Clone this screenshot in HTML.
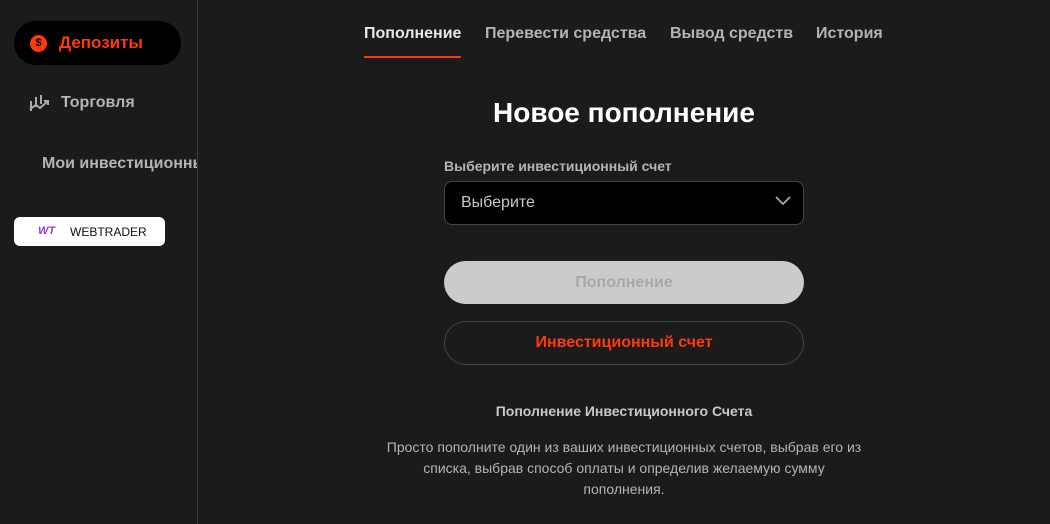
<!DOCTYPE html>
<html><head><meta charset="utf-8"><style>
body{margin:0;width:1050px;height:524px;background:#1b1b1b;font-family:"Liberation Sans",sans-serif;position:relative;overflow:hidden;color:#fff}
.a{position:absolute}
.side{left:0;top:0;width:197px;height:524px;border-right:1px solid #3a3a3a;overflow:hidden}
.tab{top:25px;font-size:16px;font-weight:bold;color:#b4b4b4}
</style></head><body>
<div class="a side">
 <div class="a" style="left:14px;top:21px;width:167px;height:44px;border-radius:22px;background:#000"></div>
 <div class="a" style="left:30px;top:35px;width:17px;height:17px;border-radius:50%;background:#ff3a0a;color:#000;font-size:11px;font-weight:bold;text-align:center;line-height:17px">$</div>
 <div class="a" style="left:59px;top:33px;font-size:17px;font-weight:bold;color:#ff3a0a">Депозиты</div>
 <svg class="a" style="left:29px;top:93px" width="21" height="20" viewBox="0 0 21 20" fill="none" stroke="#aaa" stroke-width="2"><path d="M2 8v10M7 4v10M12 2v9M1 16l6-4 4 3 8-7M15 8h4v4"/></svg>
 <div class="a" style="left:61px;top:94px;font-size:16px;font-weight:bold;color:#b4b4b4">Торговля</div>
 <div class="a" style="left:42px;top:155px;font-size:16px;font-weight:bold;color:#b4b4b4;white-space:nowrap">Мои инвестиционные счета</div>
 <div class="a" style="left:14px;top:217px;width:151px;height:29px;border-radius:6px;background:#fff"></div>
 <div class="a" style="left:38px;top:225px;font-size:11px;font-weight:bold;color:#9b3ad8;font-style:italic">WT</div>
 <div class="a" style="left:70px;top:225px;font-size:12px;color:#111">WEBTRADER</div>
</div>
<div class="a tab" style="left:364px;color:#e8e8e8">Пополнение</div>
<div class="a" style="left:364px;top:56px;width:97px;height:2px;background:#ff3a0a"></div>
<div class="a tab" style="left:485px">Перевести средства</div>
<div class="a tab" style="left:670px">Вывод средств</div>
<div class="a tab" style="left:816px">История</div>
<div class="a" style="left:424px;width:400px;top:97px;text-align:center;font-size:28px;font-weight:bold">Новое пополнение</div>
<div class="a" style="left:444px;top:158px;font-size:14px;font-weight:bold;color:#b4b4b4">Выберите инвестиционный счет</div>
<div class="a" style="left:444px;top:181px;width:358px;height:42px;border:1px solid #444;border-radius:8px;background:#000"></div>
<div class="a" style="left:461px;top:194px;font-size:16px;color:#c8c8c8">Выберите</div>
<svg class="a" style="left:775px;top:196px" width="16" height="10" viewBox="0 0 16 10" fill="none" stroke="#aaa" stroke-width="1.8"><path d="M1 1l7 7 7-7"/></svg>
<div class="a" style="left:444px;top:261px;width:360px;height:43px;border-radius:22px;background:#cbcbcb;text-align:center;line-height:43px;font-size:16px;font-weight:bold;color:#a8a8a8">Пополнение</div>
<div class="a" style="left:444px;top:321px;width:358px;height:42px;border:1px solid #444;border-radius:22px;text-align:center;line-height:42px;font-size:16px;font-weight:bold;color:#ff3a0a">Инвестиционный счет</div>
<div class="a" style="left:374px;width:500px;top:403px;text-align:center;font-size:14px;font-weight:bold;color:#c8c8c8">Пополнение Инвестиционного Счета</div>
<div class="a" style="left:374px;width:500px;top:437px;text-align:center;font-size:14px;line-height:21px;color:#b4b4b4">Просто пополните один из ваших инвестиционных счетов, выбрав его из<br>списка, выбрав способ оплаты и определив желаемую сумму<br>пополнения.</div>
</body></html>
